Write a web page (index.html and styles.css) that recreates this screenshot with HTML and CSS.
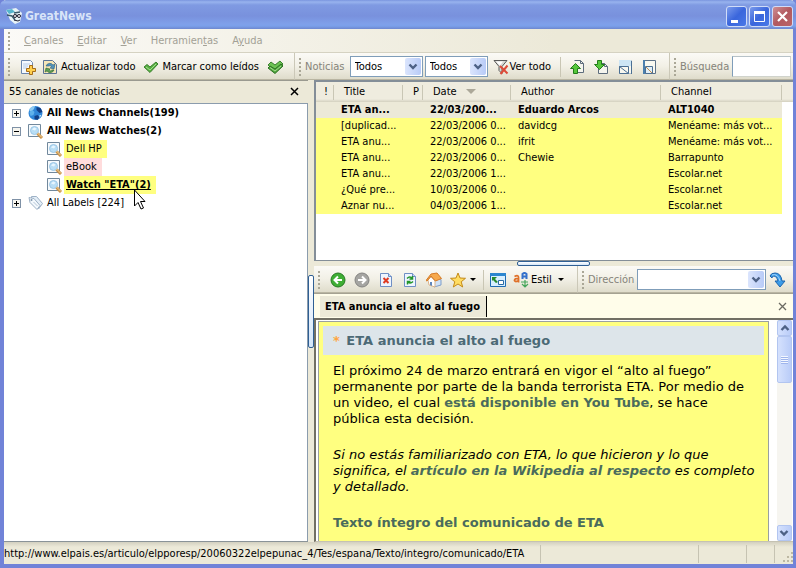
FILE: index.html
```html
<!DOCTYPE html>
<html lang="es">
<head>
    <meta charset="UTF-8">
    <meta name="viewport" content="width=device-width, initial-scale=1.0">
    <title>GreatNews</title>
    <link rel="stylesheet" href="styles.css">
</head>
<body>
    <!-- shared icons -->
    <svg class="defs" width="0" height="0">
        <symbol id="chevron" viewBox="0 0 16 16">
            <path d="M4.500 6l3.500 3.500L11.500 6" fill="none" stroke="#4d6185" stroke-width="2.400"/>
        </symbol>
        <symbol id="check" viewBox="0 0 16 16">
            <path d="M1 8l3-2.500 3 2.500 6-5 2 2-8 8.500z" fill="#57b041" stroke="#3c7f2f"/>
            <path d="M3 8l4 3 6-6" fill="none" stroke="#a5dd8f"/>
        </symbol>
        <symbol id="watch" viewBox="0 0 17 16">
            <path d="M1.500 1.500h12v12h-12z" fill="#f6fafd" stroke="#71889c"/>
            <circle cx="7.500" cy="7.500" r="4" fill="#b9def5" stroke="#9cc7e6"/>
            <path d="M5 6.500l2-2 2.500 1-1.500 2z" fill="#e8f6ff"/>
            <path d="M10.500 10.500l4.500 4.500" stroke="#c9924a" stroke-width="3"/>
            <path d="M10.500 10l4.500 4.500" stroke="#f4d59b"/>
        </symbol>
        <symbol id="page" viewBox="0 0 14 16">
            <path d="M1.500 1.500h8l3 3v10h-11z" fill="#eef5ff" stroke="#6f8fc4"/>
            <path d="M9.500 1.500v3h3" fill="#c7d8f4" stroke="#6f8fc4"/>
        </symbol>
    </svg>

    <div class="window">
        <header class="titlebar">
            <svg width="18" height="18" viewBox="0 0 18 18">
                <path d="M1 3l10-2 6 5-2 9-5 2-5-4z" fill="#e9f4f7"/>
                <path d="M1 3l6-1 3 3-6 2z" fill="#55b5ce"/>
                <path d="M2 8l5 1 3 4M9 6l6-1M9 8l6 1" fill="none" stroke="#37596a" stroke-width="1.500"/>
                <circle cx="10" cy="9" r="1.500" fill="#fff" stroke="#223"/>
                <circle cx="14" cy="9" r="1.500" fill="#fff" stroke="#223"/>
                <path d="M9 13l4 1 2-1" fill="none" stroke="#223"/>
            </svg>
            <h1>GreatNews</h1>
            <button class="win-btn" aria-label="Minimizar"><svg width="19" height="19"><path d="M4 13h7v3h-7z" fill="#fff"/></svg></button>
            <button class="win-btn" aria-label="Maximizar"><svg width="19" height="19"><path d="M4.500 5.500h10v9h-10z" fill="none" stroke="#fff"/><path d="M4 4h11v3h-11z" fill="#fff"/></svg></button>
            <button class="win-btn close" aria-label="Cerrar"><svg width="19" height="19"><path d="M5 5l9 9M14 5l-9 9" stroke="#fff" stroke-width="2.200"/></svg></button>
        </header>

        <nav class="menubar">
            <span class="grip"></span>
            <a href="#"><u>C</u>anales</a>
            <a href="#"><u>E</u>ditar</a>
            <a href="#"><u>V</u>er</a>
            <a href="#">Herramien<u>t</u>as</a>
            <a href="#">A<u>y</u>uda</a>
        </nav>

        <div class="toolbar">
            <div class="group feeds">
                <span class="grip"></span>
                <button class="tool" aria-label="Nuevo canal">
                    <svg width="16" height="16" viewBox="0 0 16 16">
                        <path d="M1.500 1.500h9l2 2v11h-11z" fill="#f4f9ff" stroke="#6b87ae"/>
                        <path d="M3 5h7M3 7h5M3 9h4" stroke="#b4cbe8"/>
                        <path d="M9.500 6.500h3v3h3v3h-3v3h-3v-3h-3v-3h3z" fill="#ffd04e" stroke="#a66d19"/>
                    </svg>
                </button>
                <button class="tool">
                    <svg width="16" height="16" viewBox="0 0 16 16">
                        <path d="M1.500 1.500h9l4 4v9h-13z" fill="#f5e6b8" stroke="#5b7396"/>
                        <path d="M4 7a4 4 0 0 1 7-1l2-1-1 5-4-1 1.500-1a2 2 0 0 0-3-1z" fill="#4f93bb" stroke="#2c5a7c" stroke-width=".6"/>
                        <path d="M12 11a4 4 0 0 1-7 1l-2 1 1-4 4 1-1 1a2 2 0 0 0 3 0z" fill="#5b9f55" stroke="#2f6130" stroke-width=".6"/>
                    </svg>
                    Actualizar todo
                </button>
                <button class="tool">
                    <svg width="16" height="16"><use href="#check"/></svg>
                    Marcar como leídos
                </button>
                <button class="tool" aria-label="Marcar todos">
                    <svg width="17" height="16" viewBox="0 0 17 16">
                        <path d="M1 6l3-3 4 3 5-4 3 3-8 7z" fill="#6cc253" stroke="#3c7f2f"/>
                        <path d="M1 9l2-2 5 3 6-5 2 2-8 7.500z" fill="#4ea53b" stroke="#2f7125"/>
                        <path d="M3 8.500l5 3.500 6-5" fill="none" stroke="#a5dd8f"/>
                    </svg>
                </button>
            </div>
            <div class="group news">
                <span class="grip"></span>
                <label for="noticias">Noticias</label>
                <span class="combo wide">
                    <select id="noticias"><option>Todos</option></select>
                    <svg width="16" height="16"><use href="#chevron"/></svg>
                </span>
                <span class="combo">
                    <select aria-label="Estado"><option>Todos</option></select>
                    <svg width="16" height="16"><use href="#chevron"/></svg>
                </span>
                <button class="tool all">
                    <svg width="16" height="16" viewBox="0 0 16 16">
                        <path d="M1 1.500h13l-5 6v7l-3-3v-4z" fill="#d8d8d4" stroke="#5a5a5a"/>
                        <path d="M3 2.500h7l-3 4z" fill="#fff"/>
                        <path d="M7 7l7.500 7.500M14.500 6.500l-7 8.500" stroke="#dd4b39" stroke-width="2"/>
                    </svg>
                    Ver todo
                </button>
                <span class="sep"></span>
                <button class="tool" aria-label="Anterior">
                    <svg width="15" height="16" viewBox="0 0 15 16">
                        <path d="M4.500 1.500h6l3 3v9h-6" fill="#f5f5ee" stroke="#5d6c7c"/>
                        <path d="M10.500 1.500v3h3" fill="none" stroke="#5d6c7c"/>
                        <path d="M5.500 4.500l5 5h-3v5h-4v-5h-3z" fill="#56c73b" stroke="#237c1a"/>
                    </svg>
                </button>
                <button class="tool" aria-label="Siguiente">
                    <svg width="15" height="16" viewBox="0 0 15 16">
                        <path d="M4.500 4.500h6l3 3v7h-9z" fill="#f5f5ee" stroke="#5d6c7c"/>
                        <path d="M10.500 4.500v3h3" fill="none" stroke="#5d6c7c"/>
                        <path d="M3.500 1.500h4v4h3l-5 5-5-5h3z" fill="#56c73b" stroke="#237c1a"/>
                    </svg>
                </button>
                <button class="tool" aria-label="Vista inferior">
                    <svg width="15" height="16" viewBox="0 0 15 16">
                        <path d="M1.500 1.500h12v13h-12z" fill="#f8f8f0" stroke="#b5c3cd"/>
                        <path d="M1 1h12v6h-12z" fill="#cde6f5"/>
                        <path d="M1.500 7.500h9v7h-9zM1.500 7.500l9 7M13.500 2v13" fill="none" stroke="#4b6f93"/>
                    </svg>
                </button>
                <button class="tool" aria-label="Vista lateral">
                    <svg width="15" height="16" viewBox="0 0 15 16">
                        <path d="M1.500 1.500h12v13h-12z" fill="#f8f8f0" stroke="#5d7288"/>
                        <path d="M1 1h2v14h-2z" fill="#4b7fae"/>
                        <path d="M3.500 7.500h7v7h-7z" fill="#e1eef7" stroke="#4b6f93"/>
                        <path d="M4 8l6 6" stroke="#c08c4c"/>
                    </svg>
                </button>
            </div>
            <div class="group search">
                <span class="grip"></span>
                <label for="busqueda">Búsqueda</label>
                <input id="busqueda" type="text">
            </div>
        </div>

        <main class="main">
            <!-- channel tree -->
            <section class="sidebar">
                <div class="side-head">
                    <span>55 canales de noticias</span>
                    <button class="plain" aria-label="Cerrar panel"><svg width="10" height="10"><path d="M1 1l7 7M8 1l-7 7" stroke="#000" stroke-width="1.500"/></svg></button>
                </div>
                <ul class="tree">
                    <li class="bold">
                        <span class="expander plus"></span>
                        <svg width="16" height="16" viewBox="0 0 16 16">
                            <circle cx="8" cy="8" r="7" fill="#2f86d8"/>
                            <path d="M1.500 5a7 7 0 0 1 6-4l-1 3-3 3z" fill="#8dcaf2"/>
                            <path d="M2 7l3-2 2 2-1 3-3 1z" fill="#5fb2ec"/>
                            <path d="M9 2l4 1 2 4-3 1-3-3zM7 11l3-1 2 2-2 3-3-1z" fill="#123f86"/>
                            <path d="M12 10l2 0-2 3z" fill="#bfe4fb"/>
                        </svg>
                        <span class="name">All News Channels(199)</span>
                    </li>
                    <li class="bold">
                        <span class="expander"></span>
                        <svg width="17" height="16"><use href="#watch"/></svg>
                        <span class="name">All News Watches(2)</span>
                    </li>
                    <li class="child">
                        <svg width="17" height="16"><use href="#watch"/></svg>
                        <span class="name yellow">Dell HP</span>
                    </li>
                    <li class="child">
                        <svg width="17" height="16"><use href="#watch"/></svg>
                        <span class="name pink">eBook</span>
                    </li>
                    <li class="child bold">
                        <svg width="17" height="16"><use href="#watch"/></svg>
                        <span class="name yellow current">Watch "ETA"(2)</span>
                        <svg class="cursor" width="13" height="21" viewBox="0 0 13 21">
                            <path d="M1.500 1v16l3.500-3.500 3 6.500 2.500-1-3-6.500h4.500z" fill="#fff" stroke="#000"/>
                        </svg>
                    </li>
                    <li>
                        <span class="expander plus"></span>
                        <svg width="16" height="16" viewBox="0 0 16 16">
                            <path d="M4 1.500l5 0 6 7-4 5.500-7-8z" fill="#e4eef7" stroke="#9db1c6"/>
                            <path d="M1.500 2.500l5 1 6 7-3 4-7-7z" fill="#f3f8fc" stroke="#9db1c6"/>
                            <circle cx="4" cy="5" r="1" fill="#7f95ad"/>
                            <path d="M6 7l4 4" stroke="#b6c7d8"/>
                        </svg>
                        <span class="name">All Labels [224]</span>
                    </li>
                </ul>
            </section>

            <div class="splitter vertical"><span></span></div>

            <div class="content">
                <section class="list">
                    <table>
                        <colgroup>
                            <col class="c-flag"><col class="c-title"><col class="c-p"><col class="c-date"><col class="c-author"><col class="c-channel"><col>
                        </colgroup>
                        <thead>
                            <tr><th>!</th><th>Title</th><th>P</th><th>Date <span class="sort"></span></th><th>Author</th><th>Channel</th><th></th></tr>
                        </thead>
                        <tbody>
                            <tr class="selected"><td></td><td>ETA an...</td><td></td><td>22/03/200...</td><td>Eduardo Arcos</td><td>ALT1040</td><td></td></tr>
                            <tr><td></td><td>[duplicad...</td><td></td><td>22/03/2006 0...</td><td>davidcg</td><td>Menéame: más vot...</td><td></td></tr>
                            <tr><td></td><td>ETA anu...</td><td></td><td>22/03/2006 0...</td><td>ifrit</td><td>Menéame: más vot...</td><td></td></tr>
                            <tr><td></td><td>ETA anu...</td><td></td><td>22/03/2006 0...</td><td>Chewie</td><td>Barrapunto</td><td></td></tr>
                            <tr><td></td><td>ETA anu...</td><td></td><td>22/03/2006 1...</td><td></td><td>Escolar.net</td><td></td></tr>
                            <tr><td></td><td>¿Qué pre...</td><td></td><td>10/03/2006 0...</td><td></td><td>Escolar.net</td><td></td></tr>
                            <tr><td></td><td>Aznar nu...</td><td></td><td>04/03/2006 1...</td><td></td><td>Escolar.net</td><td></td></tr>
                        </tbody>
                    </table>
                </section>

                <div class="splitter horizontal"><span></span></div>

                <div class="toolbar browser-bar">
                    <div class="group nav">
                        <span class="grip"></span>
                        <button class="tool" aria-label="Atrás">
                            <svg width="16" height="16" viewBox="0 0 16 16">
                                <circle cx="8" cy="8" r="7" fill="#3fae35" stroke="#257a22"/>
                                <path d="M12 8h-7M8 4.500l-3.500 3.500 3.500 3.500" fill="none" stroke="#fff" stroke-width="2"/>
                            </svg>
                        </button>
                        <button class="tool" aria-label="Adelante">
                            <svg width="16" height="16" viewBox="0 0 16 16">
                                <circle cx="8" cy="8" r="7" fill="#a5a5a2" stroke="#848482"/>
                                <path d="M4 8h7M8 4.500l3.500 3.500-3.500 3.500" fill="none" stroke="#fff" stroke-width="2"/>
                            </svg>
                        </button>
                        <button class="tool" aria-label="Detener">
                            <svg width="16" height="16" viewBox="-1 0 16 16"><use href="#page" width="14" height="16"/><path d="M4.500 6l5 5M9.500 6l-5 5" stroke="#e03a22" stroke-width="2"/></svg>
                        </button>
                        <button class="tool" aria-label="Actualizar">
                            <svg width="16" height="16" viewBox="-1 0 16 16"><use href="#page" width="14" height="16"/><path d="M4 6.500q3-3 5 0M9.500 4v3h-3M10 9.500q-3 3-5 0M4.500 12.500v-3h3" fill="none" stroke="#23952a" stroke-width="1.500"/></svg>
                        </button>
                        <button class="tool" aria-label="Inicio">
                            <svg width="16" height="16" viewBox="0 0 16 16">
                                <path d="M8 8l6-2 1 2v5l-7 2z" fill="#cfe2f7" stroke="#7f9ec9"/>
                                <path d="M2 8l3-3 4 4v6l-6-2z" fill="#fff" stroke="#d9b48c"/>
                                <path d="M0 8.500l5-6.500 6-1 4.500 5.500-6 2.500-4.500-5-4 5z" fill="#f7a94c" stroke="#d67b26"/>
                                <path d="M4 10h2v4l-2-1z" fill="#5f87bd"/>
                            </svg>
                        </button>
                        <button class="tool drop" aria-label="Favoritos">
                            <svg width="16" height="16" viewBox="0 0 16 16"><path d="M8 1l2 5 5.500.3-4.300 3.500 1.500 5.200-4.700-3-4.700 3 1.500-5.200-4.300-3.500 5.500-.3z" fill="#ffdd62" stroke="#c48a18"/></svg>
                            <span class="arrow"></span>
                        </button>
                        <span class="sep"></span>
                        <button class="tool" aria-label="Abrir en ventana">
                            <svg width="16" height="16" viewBox="0 0 16 16">
                                <path d="M.500 1.500h15v13h-15z" fill="#d7efff" stroke="#1f6bb3"/>
                                <path d="M0 1h16v3h-16z" fill="#2c86cf"/>
                                <path d="M8.500 8.500h5v4h-5z" fill="#fff" stroke="#2c6ca5"/>
                                <path d="M2 5h5l-2 2 3 3-2 1-3-3-1 1z" fill="#278a2e"/>
                            </svg>
                        </button>
                        <button class="tool drop style">
                            <svg width="16" height="16" viewBox="0 0 16 16">
                                <path d="M1.500 4.500q4-2 4 1v5M5.500 7q-4-1-4 1.500 1 2 4 0" fill="none" stroke="#df7029" stroke-width="1.800"/>
                                <path d="M9.500 7v-5q2-2 4 0v5M9.500 4.500h4" fill="none" stroke="#3471cc" stroke-width="2"/>
                                <path d="M8 10h7M12 8v6M9 12l3 3 3-3" fill="none" stroke="#45a65a" stroke-width="1.200"/>
                            </svg>
                            Estil
                            <span class="arrow"></span>
                        </button>
                    </div>
                    <div class="group address">
                        <span class="grip"></span>
                        <label for="direccion">Dirección</label>
                        <span class="combo">
                            <select id="direccion"><option></option></select>
                            <svg width="16" height="16"><use href="#chevron"/></svg>
                        </span>
                        <button class="tool" aria-label="Ir">
                            <svg width="17" height="16" viewBox="0 0 17 16"><path d="M1 4q1-3 5-3 6 0 7 8h3l-5 6-5-6h3q-1-5-4-5-2 0-2 2z" fill="#3a9be8" stroke="#1d65ad"/><path d="M3 3q6-2 8 6" fill="none" stroke="#a8dbff"/></svg>
                        </button>
                    </div>
                </div>

                <div class="tabs">
                    <button class="tab">ETA anuncia el alto al fuego</button>
                    <button class="plain" aria-label="Cerrar pestaña"><svg width="10" height="10"><path d="M1 1l7 7M8 1l-7 7" stroke="#6b6a62" stroke-width="1.300"/></svg></button>
                </div>

                <section class="view">
                    <article>
                        <h2><span>*</span> ETA anuncia el alto al fuego</h2>
                        <p>El próximo 24 de marzo entrará en vigor el “alto al fuego”<br>
                        permanente por parte de la banda terrorista ETA. Por medio de<br>
                        un video, el cual <a href="#">está disponible en You Tube</a>, se hace<br>
                        pública esta decisión.</p>
                        <p><em>Si no estás familiarizado con ETA, lo que hicieron y lo que<br>
                        significa, el <a href="#">artículo en la Wikipedia al respecto</a> es completo<br>
                        y detallado.</em></p>
                        <h3>Texto íntegro del comunicado de ETA</h3>
                    </article>
                    <div class="scrollbar">
                        <button aria-label="Subir"><svg class="up" width="13" height="14" viewBox="2 1 13 14"><use href="#chevron" width="16" height="16"/></svg></button>
                        <div class="thumb"><span></span></div>
                        <button class="down" aria-label="Bajar"><svg width="13" height="14" viewBox="2 1 13 14"><use href="#chevron" width="16" height="16"/></svg></button>
                    </div>
                </section>
            </div>
        </main>

        <footer class="statusbar">
            <span class="url">http://www.elpais.es/articulo/elpporesp/20060322elpepunac_4/Tes/espana/Texto/integro/comunicado/ETA</span>
            <span class="pane"></span>
            <span class="pane mid"></span>
            <span class="pane small"></span>
            <span class="pane last">
                <svg width="12" height="12"><path d="M9 1h2v2h-2zM5 5h2v2h-2zM9 5h2v2h-2zM1 9h2v2h-2zM5 9h2v2h-2zM9 9h2v2h-2z" fill="#bdb8a3"/></svg>
            </span>
        </footer>
    </div>
</body>
</html>
```
FILE: styles.css
```css
* {
    box-sizing: border-box;
}
body {
    margin: 0;
    font: 11px/16px "DejaVu Sans Condensed", "DejaVu Sans", sans-serif;
    color: #000;
}
button, select, input {
    font: inherit;
    color: inherit;
    margin: 0;
    padding: 0;
    border: 0;
    border-radius: 0;
    background: none;
}
svg {
    display: block;
    flex: none;
}
.defs {
    position: absolute;
}
.window {
    height: 100vh;
    display: flex;
    flex-direction: column;
    background: #ece9d8;
    border: solid #7183d8;
    border-width: 0 3px 4px 4px;
}

/* title bar */
.titlebar {
    flex: none;
    height: 29px;
    margin: 0 -3px 0 -4px;
    padding: 3px 3px 0 5px;
    display: flex;
    align-items: center;
    gap: 2px;
    background: linear-gradient(#7a95df 0, #98b3ee 2px, #7f9ae2 5px, #7991dd 16px, #7fa0ea 24px, #7ba0ea 26px, #6d87cf 29px);
    border-radius: 6px 6px 0 0;
}
.titlebar h1 {
    flex: 1;
    margin: 0;
    font: bold 12px/16px "DejaVu Sans Condensed", sans-serif;
    color: #d8e4f8;
}
.win-btn {
    width: 21px;
    height: 21px;
    border: 1px solid #d0dcf8;
    border-radius: 3px;
    background: linear-gradient(135deg, #7b9bec, #3a66dc 50%, #4a79e8);
}
.win-btn.close {
    background: linear-gradient(135deg, #cf8f94, #b1595f 50%, #bb6468);
}

/* menu and toolbars */
.menubar {
    flex: none;
    height: 24px;
    display: flex;
    align-items: center;
    gap: 14px;
    padding-left: 4px;
    background: linear-gradient(90deg, #fbfaf7, #ece9d8 70%);
    border-bottom: 1px solid #d5d2c2;
}
.menubar a {
    color: #a3a196;
    text-decoration: none;
}
.grip {
    flex: none;
    width: 2px;
    height: 18px;
    background: repeating-linear-gradient(#aaa797 0 2px, transparent 2px 4px);
}
.toolbar {
    flex: none;
    height: 27px;
    display: flex;
}
.group {
    flex: none;
    display: flex;
    align-items: center;
    padding: 1px 0 0 4px;
    background: linear-gradient(#fbfaf6, #f2f0e6 50%, #dfdccb);
    border-bottom: 1px solid #b9b5a2;
    border-right: 1px solid #cbc8b8;
    white-space: nowrap;
}
.group label {
    color: #85837a;
    padding: 0 3px 0 4px;
}
.group:last-child {
    flex: 1;
    min-width: 0;
    border-right: 0;
}
.tool {
    display: flex;
    align-items: center;
    gap: 3px;
}
.feeds {
    width: 291px;
    gap: 8px;
}
.feeds .grip, .nav .grip {
    margin-right: 2px;
}
.feeds .tool:nth-child(3) {
    margin-left: -2px;
}
.news {
    width: 375px;
    gap: 9px;
}
.news label {
    padding: 0;
    margin: 0 -4px 0 -5px;
}
.news .combo + .combo {
    margin-left: -7px;
}
.news .all {
    gap: 1px;
    margin-left: -4px;
}
.combo {
    display: flex;
    align-items: center;
    width: 63px;
    height: 21px;
    padding-right: 1px;
    background: #fff;
    border: 1px solid #7f9db9;
}
.combo.wide {
    width: 73px;
}
.combo select {
    flex: 1;
    min-width: 0;
    height: 19px;
    padding-left: 4px;
    appearance: none;
}
.combo svg {
    height: 17px;
    background: linear-gradient(90deg, #dbe5fd, #b8cbf7);
    border-radius: 2px;
    pointer-events: none;
}
.sep {
    width: 1px;
    height: 20px;
    background: #c9c6b4;
}
.search input {
    flex: 1;
    min-width: 0;
    height: 21px;
    margin-right: 2px;
    background: #fff;
    border: 1px solid #d0d3cc;
    border-left-color: #7f9db9;
    border-top-color: #b7c2c8;
}

/* channel tree */
.main {
    flex: 1;
    min-height: 0;
    display: flex;
}
.sidebar {
    width: 304px;
    display: flex;
    flex-direction: column;
    border-bottom: 1px solid #8a9398;
}
.side-head {
    height: 23px;
    display: flex;
    align-items: center;
    justify-content: space-between;
    padding: 0 8px 0 5px;
    border-top: 1px solid #9a9a90;
}
.tree {
    flex: 1;
    margin: 0;
    padding: 0 0 0 8px;
    list-style: none;
    background: #fff;
    border: solid #8b9cad;
    border-width: 1px 1px 0 0;
}
.tree li {
    position: relative;
    height: 18px;
    display: flex;
    align-items: center;
}
.tree .child {
    padding-left: 34px;
}
.tree li > svg {
    width: 17px;
}
.expander {
    width: 9px;
    height: 9px;
    margin-right: 6px;
    border: 1px solid #7f91a6;
    background: linear-gradient(#000, #000) center / 5px 1px no-repeat #f6f5ef;
}
.expander.plus {
    background: linear-gradient(#000, #000) center / 5px 1px no-repeat, linear-gradient(#000, #000) center / 1px 5px no-repeat #f6f5ef;
}
.name {
    margin-left: 1px;
    padding: 0 5px 0 2px;
    line-height: 18px;
}
.yellow {
    background: #ffff80;
}
.pink {
    background: #ffdcdc;
}
.current {
    text-decoration: underline;
}
.tree li > .cursor {
    position: absolute;
    left: 121px;
    top: 13px;
    width: 13px;
    z-index: 1;
}
.bold, .selected {
    font-weight: bold;
}

/* splitters */
.splitter {
    flex: none;
    display: flex;
    align-items: center;
    justify-content: center;
}
.splitter span {
    flex: none;
    background: linear-gradient(#fff, #d2e4f8);
    border: 1px solid #2f5f94;
    border-radius: 2px;
}
.vertical {
    width: 6px;
}
.vertical span {
    width: 6px;
    height: 73px;
}
.horizontal {
    height: 5px;
}
.horizontal span {
    width: 73px;
    height: 5px;
}

/* news list */
.content {
    flex: 1;
    min-width: 0;
    display: flex;
    flex-direction: column;
}
.list {
    flex: none;
    height: 181px;
    background: #fff;
    border: solid #848e98;
    border-width: 2px 0 1px 2px;
    overflow: hidden;
}
table {
    width: 100%;
    table-layout: fixed;
    border-collapse: collapse;
    white-space: nowrap;
}
.c-flag { width: 18px; }
.c-title { width: 69px; }
.c-p { width: 20px; }
.c-date { width: 88px; }
.c-author { width: 150px; }
.c-channel { width: 121px; }
th {
    height: 20px;
    padding: 0 0 0 10px;
    font-weight: normal;
    text-align: left;
    background: linear-gradient(#c9c6b5, #c9c6b5) right center / 1px 15px no-repeat, linear-gradient(#efecdf 17px, #d3d0bf);
}
th:first-child {
    padding-left: 8px;
}
th:last-child {
    background: linear-gradient(#efecdf 17px, #d3d0bf);
}
.sort {
    display: inline-block;
    margin-left: 6px;
    border: solid transparent;
    border-width: 5px 5px 0;
    border-top-color: #aca899;
    vertical-align: 1px;
}
td {
    height: 16px;
    padding: 0 0 0 7px;
    background: #ffff80;
}
.selected td {
    background: #ece9d8;
}
tbody td:last-child {
    background: #fff;
}

/* browser */
.nav {
    width: 264px;
    gap: 8px;
}
.nav .sep {
    margin: 0 -2px 0 -1px;
}
.nav .style {
    gap: 2px;
    margin-left: -1px;
}
.nav .style .arrow {
    margin-left: 4px;
}
.drop {
    gap: 4px;
}
.arrow {
    border: solid transparent;
    border-width: 3px 3px 0;
    border-top-color: #000;
}
.address .combo {
    flex: 1;
}
.address .tool {
    margin: 0 7px 0 3px;
}
.tabs {
    flex: none;
    height: 25px;
    display: flex;
    justify-content: space-between;
    align-items: center;
    padding: 2px 5px 1px 6px;
    background: #fffdea;
    border-top: 1px solid #a5a292;
}
.tab {
    align-self: stretch;
    padding: 0 6px 0 5px;
    font-weight: bold;
    background: #ece9d8;
    border-right: 1px solid #000;
}
.view {
    flex: 1;
    min-height: 0;
    display: flex;
    background: #fff;
    border: solid #716f64;
    border-width: 2px 0 0 2px;
    border-bottom: 1px solid #c5c2b2;
    overflow: hidden;
}
article {
    flex: 1;
    min-width: 0;
    margin: 1px 8px 0 2px;
    padding: 4px 4px 0;
    font: 13px/16px "DejaVu Sans", sans-serif;
    background: #ffff80;
    border: solid #9aa0a0;
    border-width: 1px 1px 0 1px;
    white-space: nowrap;
    overflow: hidden;
}
article h2 {
    margin: 0 0 8px;
    padding: 0 10px;
    font: bold 13px/29px "DejaVu Sans", sans-serif;
    color: #4c6a76;
    background: #dde5ea;
}
article h2 span {
    color: #ffa640;
    margin-right: 2px;
}
article p {
    margin: 0 0 20px;
    padding-left: 10px;
}
article a, article h3 {
    font-weight: bold;
    color: #4a6b5c;
    text-decoration: none;
}
article h3 {
    margin: 0;
    padding-left: 10px;
    font-size: 13px;
}
.scrollbar {
    width: 15px;
    margin-right: 1px;
    display: flex;
    flex-direction: column;
    background: #f6f5f0;
}
.scrollbar button, .thumb {
    flex: none;
    height: 16px;
    padding: 0;
    background: linear-gradient(90deg, #d5e1fd, #b9ccf8);
    border: 1px solid #b2c5f0;
    border-radius: 2px;
}
.up {
    transform: rotate(180deg);
}
.thumb {
    height: 47px;
    display: flex;
    align-items: center;
    justify-content: center;
}
.thumb span {
    width: 7px;
    height: 8px;
    background: repeating-linear-gradient(#f3f7ff 0 1px, #9fb5ec 1px 2px);
}
.scrollbar .down {
    margin-top: auto;
}

/* status bar */
.statusbar {
    flex: none;
    height: 22px;
    display: flex;
    align-items: center;
    padding-top: 2px;
    background: linear-gradient(#d3d0c0, #ece9d8 5px);
}
.url {
    flex: 1;
    min-width: 0;
    white-space: nowrap;
}
.pane {
    width: 158px;
    height: 18px;
    border-left: 1px solid #c6c3b2;
}
.pane.mid {
    width: 48px;
}
.pane.small {
    width: 28px;
}
.pane.last {
    width: 19px;
    padding: 6px 0 0 7px;
}
```
